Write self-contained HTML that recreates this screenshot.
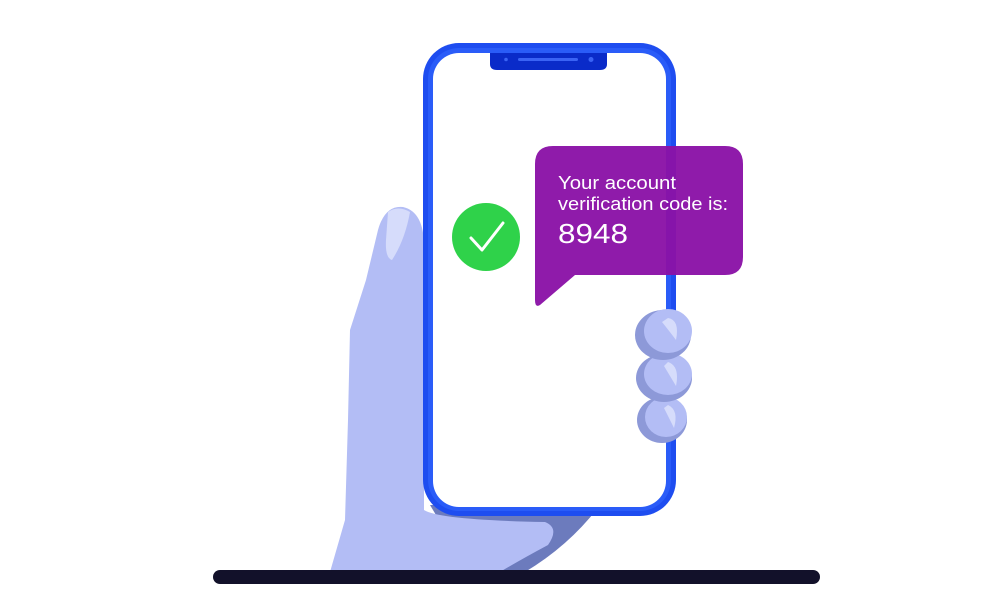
<!DOCTYPE html>
<html><head><style>
html,body{margin:0;padding:0;background:#fff;width:1000px;height:600px;overflow:hidden}
svg{display:block}
text{font-family:"Liberation Sans",sans-serif;fill:#fff}
</style></head><body>
<svg width="1000" height="600" viewBox="0 0 1000 600">
<path d="M430 505 L600 505 Q570 545 525 572 L470 572 Z" fill="#6c7bbd"/>
<path d="M330 572 L345 520 L348 420 L350 330 L366 280 L378 230 Q385 205 403 207 Q425 212 424 250 L424 510 Q440 520 545 522 Q560 528 548 545 Q520 560 500 572 Z" fill="#b3bdf5"/>
<path d="M388 212 Q398 205 410 212 Q405 240 392 260 Q385 258 386 240 Z" fill="#d6dcfb"/>
<rect x="423" y="43" width="253" height="473" rx="36" fill="#1e4df0"/>
<rect x="428" y="48" width="243" height="463" rx="31" fill="#2a5cf8"/>
<rect x="433" y="53" width="233" height="454" rx="26" fill="#fff"/>
<path d="M490 53 H607 V64 Q607 70 600 70 H497 Q490 70 490 64 Z" fill="#0a2bc9"/>
<rect x="518" y="58" width="60" height="3" rx="1.5" fill="#3a63f5"/>
<circle cx="506" cy="59.5" r="1.8" fill="#3a63f5"/>
<circle cx="591" cy="59.5" r="2.5" fill="#3a63f5"/>
<g>
<ellipse cx="662" cy="420" rx="25" ry="23" fill="#8d99d8"/>
<ellipse cx="666" cy="417" rx="21" ry="20" fill="#b3bdf5"/>
<ellipse cx="664" cy="378" rx="28" ry="24" fill="#8d99d8"/>
<ellipse cx="668" cy="374" rx="24" ry="21" fill="#b3bdf5"/>
<ellipse cx="663" cy="335" rx="28" ry="25" fill="#8d99d8"/>
<ellipse cx="668" cy="331" rx="24" ry="22" fill="#b3bdf5"/>
<path d="M668 318 Q680 320 676 340 Q670 332 662 322 Z" fill="#d6dcfb"/>
<path d="M668 362 Q680 366 676 386 Q670 376 664 366 Z" fill="#d6dcfb"/>
<path d="M668 405 Q679 410 674 428 Q669 418 664 408 Z" fill="#d6dcfb"/>
</g>
<circle cx="486" cy="237" r="34" fill="#2fd24a"/>
<path d="M471 238 L482 250 L503 223" stroke="#fff" stroke-width="3" fill="none" stroke-linecap="round" stroke-linejoin="round"/>
<path d="M553 146 H725 Q743 146 743 164 V257 Q743 275 725 275 H575 L540 305 Q535 308 535 300 V164 Q535 146 553 146 Z" fill="#8a12a7" fill-opacity="0.96"/>
<text x="558" y="189" font-size="18" textLength="118" lengthAdjust="spacingAndGlyphs">Your account</text>
<text x="558" y="210" font-size="18" textLength="170" lengthAdjust="spacingAndGlyphs">verification code is:</text>
<text x="558" y="243" font-size="28" textLength="70" lengthAdjust="spacingAndGlyphs">8948</text>
<rect x="213" y="570" width="607" height="14" rx="7" fill="#12112a"/>
</svg>
</body></html>
